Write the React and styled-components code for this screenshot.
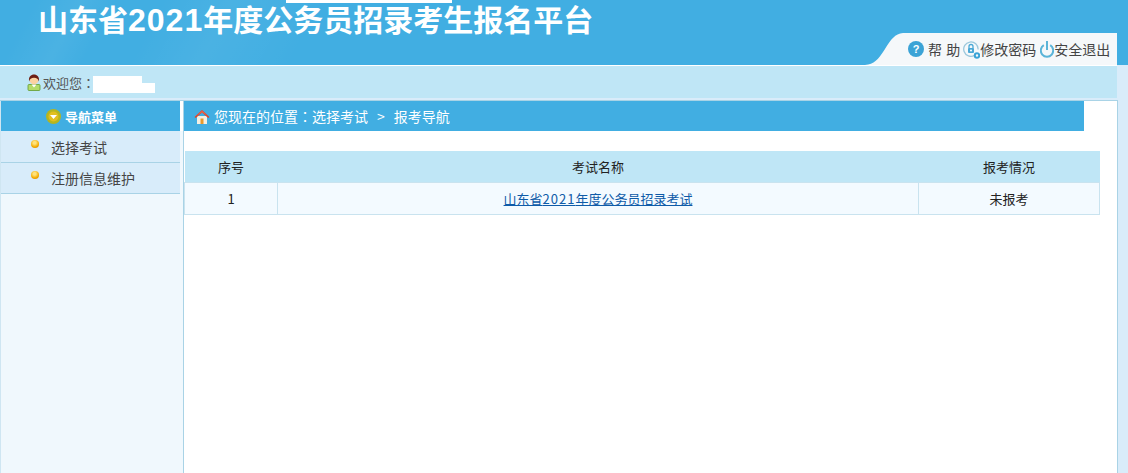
import React from "react";
import styled, { createGlobalStyle } from "styled-components";

const Global = createGlobalStyle`
  html, body { margin: 0; padding: 0; height: 100%; }
  body {
    background: #d9ecfa;
    font-family: "Noto Sans CJK SC", "Liberation Sans", sans-serif;
    font-size: 13px;
    color: #333;
    overflow: hidden;
  }
`;

const Page = styled.div`
  height: 473px;
  display: flex;
  flex-direction: column;
`;

const Header = styled.header`
  position: relative;
  height: 65px;
  flex: none;
  display: flex;
  justify-content: space-between;
  align-items: flex-end;
  padding-right: 11px;
  background:
    linear-gradient(118deg, rgba(255,255,255,0) 3%, rgba(255,255,255,.05) 7%, rgba(255,255,255,0) 10%, rgba(255,255,255,0) 14%, rgba(255,255,255,.05) 20%, rgba(255,255,255,0) 28%),
    #41aee2;
`;

const Redacted = styled.div`
  position: absolute;
  left: 286px;
  top: 0;
  width: 166px;
  height: 3px;
  background: #fff;
`;

const Title = styled.h1`
  align-self: flex-start;
  margin: 0 0 0 38px;
  font-family: "Liberation Sans", "Noto Sans CJK SC", sans-serif;
  font-size: 30px;
  line-height: 41px;
  font-weight: 700;
  color: #fff;
  white-space: nowrap;
`;

const TitleDigits = styled.span`
  font-size: 32px;
  letter-spacing: 1px;
`;

const Tab = styled.div`
  display: flex;
  align-items: flex-end;
  height: 32px;
`;

const TabBody = styled.div`
  height: 32px;
  width: 214px;
  box-sizing: border-box;
  background: #f5f8fa;
  display: flex;
  align-items: center;
  padding: 0 0 0 5px;
  font-size: 14px;
  color: #444;
`;

const TabLink = styled.span`
  display: flex;
  align-items: center;
  margin-right: ${(p) => p.$gap || 0}px;
  white-space: nowrap;
`;

const TabLabel = styled.span`
  word-spacing: ${(p) => p.$spacing || 0}px;
  line-height: 18px;
  margin-left: ${(p) => p.$ml || 0}px;
`;

const WelcomeBar = styled.div`
  flex: none;
  height: 32px;
  margin-right: 11px;
  border-top: 1px solid #fff;
  background: #bfe6f6;
  display: flex;
  align-items: center;
  padding-left: 27px;
  color: #555;
`;

const Colon = styled.span`
  font-family: "Noto Sans CJK TC", sans-serif;
`;

const Name = styled.span`
  width: 62px;
  height: 17px;
  margin: 5px 0 0 -2px;
  background: linear-gradient(#fff, #fff) 0 0 / 49px 17px no-repeat,
    linear-gradient(#fff, #fff) 0 100% / 62px 10px no-repeat;
`;

const Body = styled.div`
  flex: 1;
  display: flex;
  margin: 2px 10px 0 0;
  background: #fff;
  border-top: 1px solid #a9d3e6;
  border-right: 1px solid #a9d3e6;
  min-height: 0;
`;

const Side = styled.aside`
  width: 184px;
  flex: none;
  padding-left: 1px;
  box-sizing: border-box;
  background: #f0f8fd;
  border-right: 1px solid #a9d3e6;
  box-shadow: inset 1px 0 0 #cfe6f2;
`;

const SideTitle = styled.div`
  width: 179px;
  height: 30px;
  background: #41aee2;
  color: #fff;
  font-weight: 700;
  display: flex;
  align-items: center;
  justify-content: center;
  gap: 4px;
  box-shadow: 3px 0 0 #fff;
  padding-right: 18px;
  box-sizing: border-box;
`;

const SideItem = styled.div`
  width: 179px;
  height: ${(p) => p.$h}px;
  box-sizing: border-box;
  background: #d8ecfa;
  border-bottom: 1px solid #a9d3e6;
  display: flex;
  align-items: center;
  font-size: 14px;
  color: #444;
  padding: ${(p) => p.$top}px 0 0 30px;
`;

const Bullet = styled.i`
  width: 8px;
  height: 8px;
  border-radius: 50%;
  margin: -6px 12px 0 0;
  background: radial-gradient(circle at 45% 35%, #ffe27a 0 20%, #f5ac00 60%, #c9760a 100%);
`;

const Content = styled.main`
  flex: 1;
  min-width: 0;
`;

const Crumb = styled.div`
  width: 900px;
  height: 30px;
  background: #41aee2;
  color: #fff;
  display: flex;
  align-items: center;
  padding-left: 10px;
  box-sizing: border-box;
  font-size: 14px;
  gap: 4px;
  white-space: pre;
`;

const CrumbArrow = styled.span`
  margin: 0 9px;
`;

const CrumbText = styled.span`
  display: flex;
`;

const Table = styled.table`
  width: 916px;
  margin-top: 20px;
  border-collapse: collapse;
  table-layout: fixed;
  color: #222;
`;

const Th = styled.th`
  height: 31px;
  padding: 0;
  background: #bfe6f6;
  font-weight: 400;
  text-align: center;
  width: ${(p) => p.$w ? p.$w + "px" : "auto"};
`;

const Td = styled.td`
  height: 31px;
  padding: 0;
  background: #f3faff;
  border: 1px solid #c9e3ef;
  text-align: center;
`;

const ExamLink = styled.a`
  color: #0e5ba8;
  text-decoration: underline;
`;

const LinkDigits = styled.span`
  letter-spacing: 1px;
`;

const UserIcon = () => (
  <svg width="14" height="17" viewBox="0 0 14 17" style={{ marginRight: 2 }}>
    <rect x="1" y="10.500" width="12" height="6" rx="1" fill="#b4dc6a" stroke="#5f9a2e" strokeWidth=".8" />
    <path d="M4.500 10.500 7 13.500l2.500-3z" fill="#fff" />
    <circle cx="7" cy="6" r="4.400" fill="#fcd2a0" />
    <path d="M2.200 7.500C1 2.600 4.200.4 7 .4s6 2.200 4.800 7.100c-.5-2.600-2-3.700-4.800-3.700s-4.300 1.100-4.800 3.700z" fill="#6e1f14" />
  </svg>
);

const HelpIcon = () => (
  <svg width="16" height="16" viewBox="0 0 16 16">
    <circle cx="8" cy="8" r="8" fill="#3ba3d6" />
    <text x="8" y="12" textAnchor="middle" fontSize="11" fontWeight="700" fill="#fff" fontFamily="Liberation Sans">?</text>
  </svg>
);

const LockIcon = () => (
  <svg width="17" height="20" viewBox="0 0 17 20">
    <path d="M11.500 16.400A7.200 7.200 0 1 1 15.100 10.500" fill="none" stroke="#9cc8dc" strokeWidth="1.300" />
    <rect x="5" y="9" width="6" height="5" rx="1" fill="#4aa8d6" />
    <path d="M6 9.500V7.500a2 2 0 0 1 4 0V9.500" fill="none" stroke="#4aa8d6" strokeWidth="1.300" />
    <circle cx="8" cy="11.500" r="1" fill="#fff" />
    <circle cx="14" cy="16.500" r="2.200" fill="none" stroke="#3ba3d6" strokeWidth="2" />
  </svg>
);

const PowerIcon = () => (
  <svg width="14" height="19" viewBox="0 0 14 19">
    <path d="M3.800 5.200a6.200 6.200 0 1 0 6.400 0" fill="none" stroke="#5ab4d8" strokeWidth="2" />
    <path d="M7 1v9" stroke="#5ab4d8" strokeWidth="2" />
  </svg>
);

const ArrowBadge = () => (
  <svg width="15" height="15" viewBox="0 0 15 15">
    <circle cx="7.500" cy="7.500" r="7.500" fill="#b5b51f" />
    <circle cx="7.500" cy="7.500" r="5" fill="#e2bf1e" />
    <path d="M4 6h7L7.500 10z" fill="#fff" />
  </svg>
);

const HomeIcon = () => (
  <svg width="16" height="15" viewBox="0 0 16 15">
    <path d="M3 7h10v8H3z" fill="#f4efe2" />
    <path d="M0.500 8 8 1l7.500 7-1.300 1L8 3.500 1.800 9z" fill="#d9462e" />
    <path d="M2 7 8 1.500 14 7 8 3.500z" fill="#e8644a" />
    <rect x="6.500" y="9.500" width="3" height="5.500" fill="#e89a2c" />
  </svg>
);

const SwooshIcon = () => (
  <svg width="38" height="32" viewBox="0 0 38 32">
    <path d="M0 32C9 31 13 27 20 16 26 6 30 1 38 0V32z" fill="#f5f8fa" />
  </svg>
);

export default function App() {
  return (
    <Page>
      <Global />
      <Header>
        <Redacted />
        <Title>山东省<TitleDigits>2021</TitleDigits>年度公务员招录考生报名平台</Title>
        <Tab>
          <SwooshIcon />
          <TabBody>
            <TabLink $gap={3}>
              <HelpIcon />
              <TabLabel $ml={4} $spacing={1}>帮 助</TabLabel>
            </TabLink>
            <TabLink $gap={4}>
              <LockIcon />
              <TabLabel>修改密码</TabLabel>
            </TabLink>
            <TabLink>
              <PowerIcon />
              <TabLabel>安全退出</TabLabel>
            </TabLink>
          </TabBody>
        </Tab>
      </Header>
      <WelcomeBar>
        <UserIcon />
        欢迎您<Colon>：</Colon>
        <Name />
      </WelcomeBar>
      <Body>
        <Side>
          <SideTitle>
            <ArrowBadge />
            导航菜单
          </SideTitle>
          <SideItem $h={32} $top={1}><Bullet />选择考试</SideItem>
          <SideItem $h={31} $top={0}><Bullet />注册信息维护</SideItem>
        </Side>
        <Content>
          <Crumb>
            <HomeIcon />
            <CrumbText>您现在的位置<Colon>：</Colon>选择考试<CrumbArrow>&gt;</CrumbArrow>报考导航</CrumbText>
          </Crumb>
          <Table>
            <thead>
              <tr>
                <Th $w={93}>序号</Th>
                <Th $w={641}>考试名称</Th>
                <Th>报考情况</Th>
              </tr>
            </thead>
            <tbody>
              <tr>
                <Td>1</Td>
                <Td><ExamLink href="#">山东省<LinkDigits>2021</LinkDigits>年度公务员招录考试</ExamLink></Td>
                <Td>未报考</Td>
              </tr>
            </tbody>
          </Table>
        </Content>
      </Body>
    </Page>
  );
}
